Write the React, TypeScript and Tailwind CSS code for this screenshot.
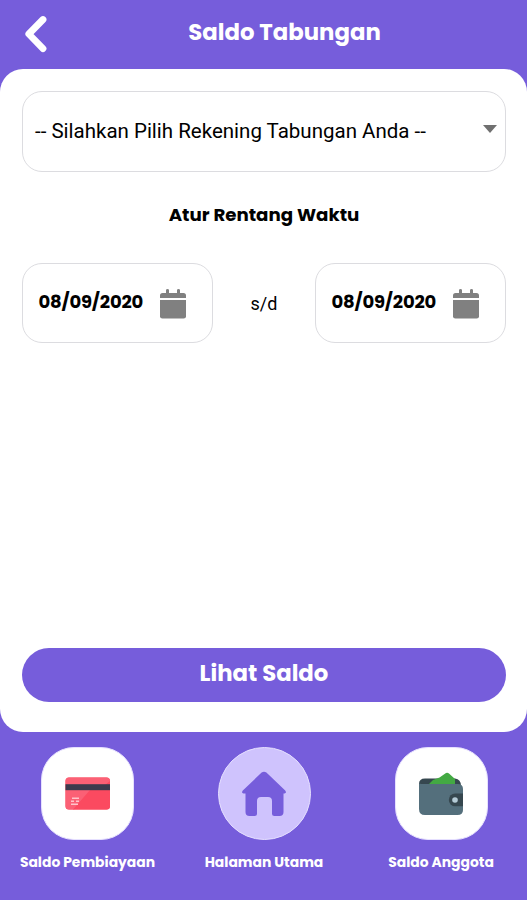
import React from 'react';

interface DateFieldProps {
  value: string;
}

interface NavItemProps {
  label: string;
  active?: boolean;
  children: React.ReactNode;
}

function BackIcon() {
  return (
    <svg width="24" height="38" viewBox="0 0 24 38" fill="none" stroke="#fff" strokeWidth="6.8" strokeLinecap="round" strokeLinejoin="round">
      <path d="M20 4.500 5.800 19 20 33.600" />
    </svg>
  );
}

function CalendarIcon() {
  return (
    <svg width="26" height="30" viewBox="0 0 26 30" fill="#808080">
      <path d="M0 9V6.500Q0 4 2.500 4H6V1.200Q6 0 7.500 0T9 1.200V4h8V1.200Q17 0 18.500 0T20 1.200V4h3.500Q26 4 26 6.500V9Z" />
      <path d="M0 11h26v16.200Q26 29.500 23.700 29.500H2.300Q0 29.500 0 27.200Z" />
    </svg>
  );
}

function CreditCardIcon() {
  return (
    <svg width="46" height="33" viewBox="0 0 46 33">
      <rect x="0.500" y="0.500" width="44.500" height="32" rx="3.500" fill="#fb4a60" />
      <path d="M4 .5h37.500a3.500 3.500 0 0 1 3.500 3.500L9 32.500H4a3.500 3.500 0 0 1-3.500-3.500V4A3.500 3.500 0 0 1 4 .5Z" fill="#fb6075" />
      <path d="M25 13h20v16a3.500 3.500 0 0 1-3.500 3.500H8Z" fill="#fb4a60" />
      <rect x="0.500" y="7.200" width="44.500" height="6" fill="#3c3a4d" />
      <path d="M7 21.200h7M6 24.200h3M11 24.200h3M6 27.200h7" stroke="#ffc3ca" strokeWidth="1.500" />
    </svg>
  );
}

function HomeIcon() {
  return (
    <svg width="46" height="46" viewBox="0 0 46 46" fill="#765ddb">
      <path d="M20.600 1.600Q23 0 25.400 1.600L44.200 19.500Q46 22 43.500 22.500H42.500V41Q42.500 45 38.500 45H33.500Q31 45 31 42.500V30Q31 26 27 26H20Q16 26 16 30V42.500Q16 45 13.500 45H8.500Q4.500 45 4.500 41V22.500H2.500Q0 22 1.800 19.500Z" />
    </svg>
  );
}

function WalletIcon() {
  return (
    <svg width="45" height="44" viewBox="0 0 45 44">
      <path d="M0 12Q0 6.500 6 6.500H36Q42 7 42 14H0Z" fill="#36474f" />
      <path d="M10 12 14 8 20.500 5.500 27 1Q28.500.2 30 1.500L36 7V12Z" fill="#43a943" />
      <path d="M0 11.500Q2 12 6 12H38.500Q44 12 44 17V38Q44 43 38.500 43H6Q0 43 0 37Z" fill="#546f7c" />
      <path d="M44 21.500H36.200a6.300 6.300 0 0 0 0 12.800H44Z" fill="#36474f" />
      <circle cx="36" cy="28" r="2.800" fill="#b5cbd6" />
    </svg>
  );
}

function DateField({ value }: DateFieldProps) {
  return (
    <button className="flex h-20 w-[191px] items-center rounded-[20px] border border-[#dcdce0] pl-[15.5px]">
      <span className="w-[106px] pb-1 text-left text-[18px] font-bold tracking-[-0.2px] whitespace-nowrap">{value}</span>
      <span className="ml-[15px] pt-px">
        <CalendarIcon />
      </span>
    </button>
  );
}

function NavItem({ label, active, children }: NavItemProps) {
  return (
    <a className="flex flex-col items-center">
      <span
        className={
          active
            ? 'flex h-[93px] w-[93px] items-center justify-center rounded-full border border-[#e6e0ff] bg-[#cfc3fd]'
            : 'flex h-[93px] w-[93px] items-center justify-center rounded-[33px] border border-[#e6e0ff] bg-white'
        }
      >
        {children}
      </span>
      <span className="mt-[12px] text-[13.9px] leading-5 font-bold whitespace-nowrap text-white">{label}</span>
    </a>
  );
}

export default function App() {
  return (
    <div className="flex h-[900px] w-[527px] flex-col overflow-hidden bg-[#765ddb] font-[Poppins,Inter,sans-serif] text-black">
      <header className="flex h-[69px] shrink-0 items-start">
        <button className="mt-[15px] ml-[23px]">
          <BackIcon />
        </button>
        <h1 className="mt-[16px] ml-[42px] w-[391px] text-center text-[22.8px] leading-8 font-bold text-white">Saldo Tabungan</h1>
      </header>

      <main className="flex h-[663px] shrink-0 flex-col rounded-[23px] bg-white px-[22px] pt-[22px] pb-[30px]">
        <div className="flex h-[81px] w-[484px] shrink-0 items-center justify-between rounded-[20px] border border-[#dcdce0] pr-2 pl-3">
          <span className="font-[Roboto,sans-serif] text-[20.5px] whitespace-nowrap">-- Silahkan Pilih Rekening Tabungan Anda --</span>
          <svg width="14" height="8" viewBox="0 0 14 8" className="mb-[5px]" fill="#707070">
            <path d="M0 0h14L7 8Z" />
          </svg>
        </div>

        <h2 className="mt-[29px] w-[484px] text-center text-[18.2px] leading-7 font-bold">Atur Rentang Waktu</h2>

        <div className="mt-[34px] flex w-[484px] items-center justify-between">
          <DateField value="08/09/2020" />
          <span className="pt-px font-[Roboto,sans-serif] text-[18px]">s/d</span>
          <DateField value="08/09/2020" />
        </div>

        <button className="mt-auto h-[54px] w-[484px] shrink-0 rounded-full bg-[#765ddb] pb-1 text-[22.8px] font-bold text-white">
          Lihat Saldo
        </button>
      </main>

      <nav className="grid grid-cols-[175px_178px_176px] pt-[15px]">
        <NavItem label="Saldo Pembiayaan">
          <CreditCardIcon />
        </NavItem>
        <NavItem label="Halaman Utama" active>
          <HomeIcon />
        </NavItem>
        <NavItem label="Saldo Anggota">
          <WalletIcon />
        </NavItem>
      </nav>
    </div>
  );
}
